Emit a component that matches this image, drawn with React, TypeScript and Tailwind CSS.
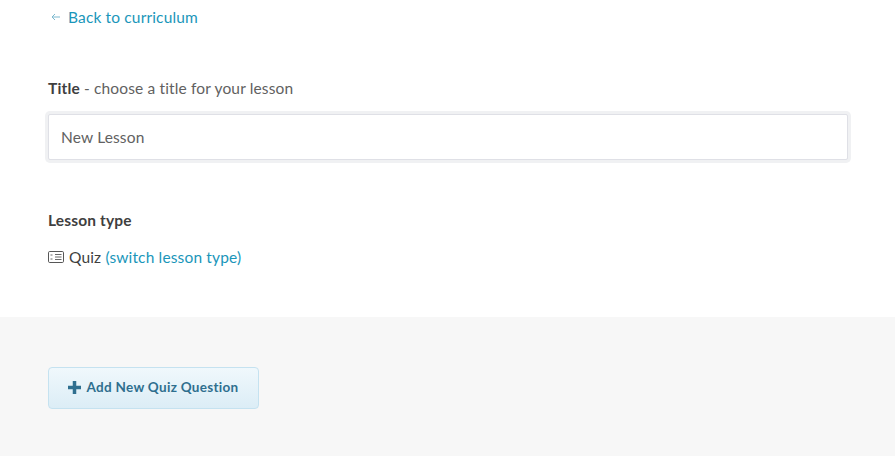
const font = "font-['Lato','Noto_Sans',sans-serif]";

function QuizIcon() {
  return (
    <svg width="16" height="12" viewBox="0 0 16 12" fill="none" stroke="#444" strokeWidth="0.9" className="shrink-0">
      <rect x="0.5" y="0.5" width="15" height="11" rx="1.2" />
      <path d="M2.5 4h2M2.5 8h2M7 3.5h6.5M7 6h6.5M7 8.5h6.5" strokeWidth="0.8" />
    </svg>
  );
}

function ArrowIcon() {
  return (
    <svg width="10" height="8" viewBox="0 0 10 8" fill="none" stroke="#7db9cf" strokeWidth="1" className="shrink-0">
      <path d="M9 4H1.5M4 1L1 4l3 3" />
    </svg>
  );
}

export default function App() {
  return (
    <div className={`${font} w-[895px] h-[456px] overflow-hidden bg-white flex flex-col text-[15.5px] tracking-[0.15px]`}>
      <div className="h-[317px] shrink-0 pl-[48px] pr-[47px] flex flex-col">
        <a className="mt-[7px] ml-[3px] h-[20px] flex items-center gap-[7px] text-[#1a96ba] leading-[20px]">
          <ArrowIcon />
          <span>Back to curriculum</span>
        </a>
        <div className="mt-[51px] h-[20px] leading-[20px] text-[#616161]">
          <span className="font-bold text-[#3f3f3f]">Title</span> - choose a title for your lesson
        </div>
        <input
          readOnly
          value="New Lesson"
          className="mt-[16px] w-full h-[46px] shrink-0 rounded-[2px] bg-white border border-[#dfe0e6] shadow-[0_0_0_3px_#f0f1f3] px-[12px] text-[15.5px] tracking-[0.15px] text-[#616161] outline-none"
        />
        <div className="mt-[50px] h-[20px] leading-[20px] font-bold text-[#3f3f3f]">Lesson type</div>
        <div className="mt-[17px] h-[20px] flex items-center gap-[5px] leading-[20px] text-[#3f3f3f]">
          <QuizIcon />
          <span>
            Quiz <span className="text-[#1a96ba]">(switch lesson type)</span>
          </span>
        </div>
      </div>
      <div className="flex-1 bg-[#f7f7f7] pl-[48px] pt-[50px]">
        <button className="w-[211px] h-[42px] pb-[1px] rounded-[4px] border border-[#c5e2f0] bg-gradient-to-b from-[#f0f8fc] to-[#dcedf6] flex items-center justify-center gap-[5px] text-[13.5px] tracking-[0.3px] font-bold text-[#2f6f8f]">
          <svg width="13" height="13" viewBox="0 0 13 13" fill="#2f6f8f" className="shrink-0">
            <path d="M4.75 0h3.5v4.75H13v3.5H8.25V13h-3.5V8.25H0v-3.5h4.75z" />
          </svg>
          <span>Add New Quiz Question</span>
        </button>
      </div>
    </div>
  );
}
